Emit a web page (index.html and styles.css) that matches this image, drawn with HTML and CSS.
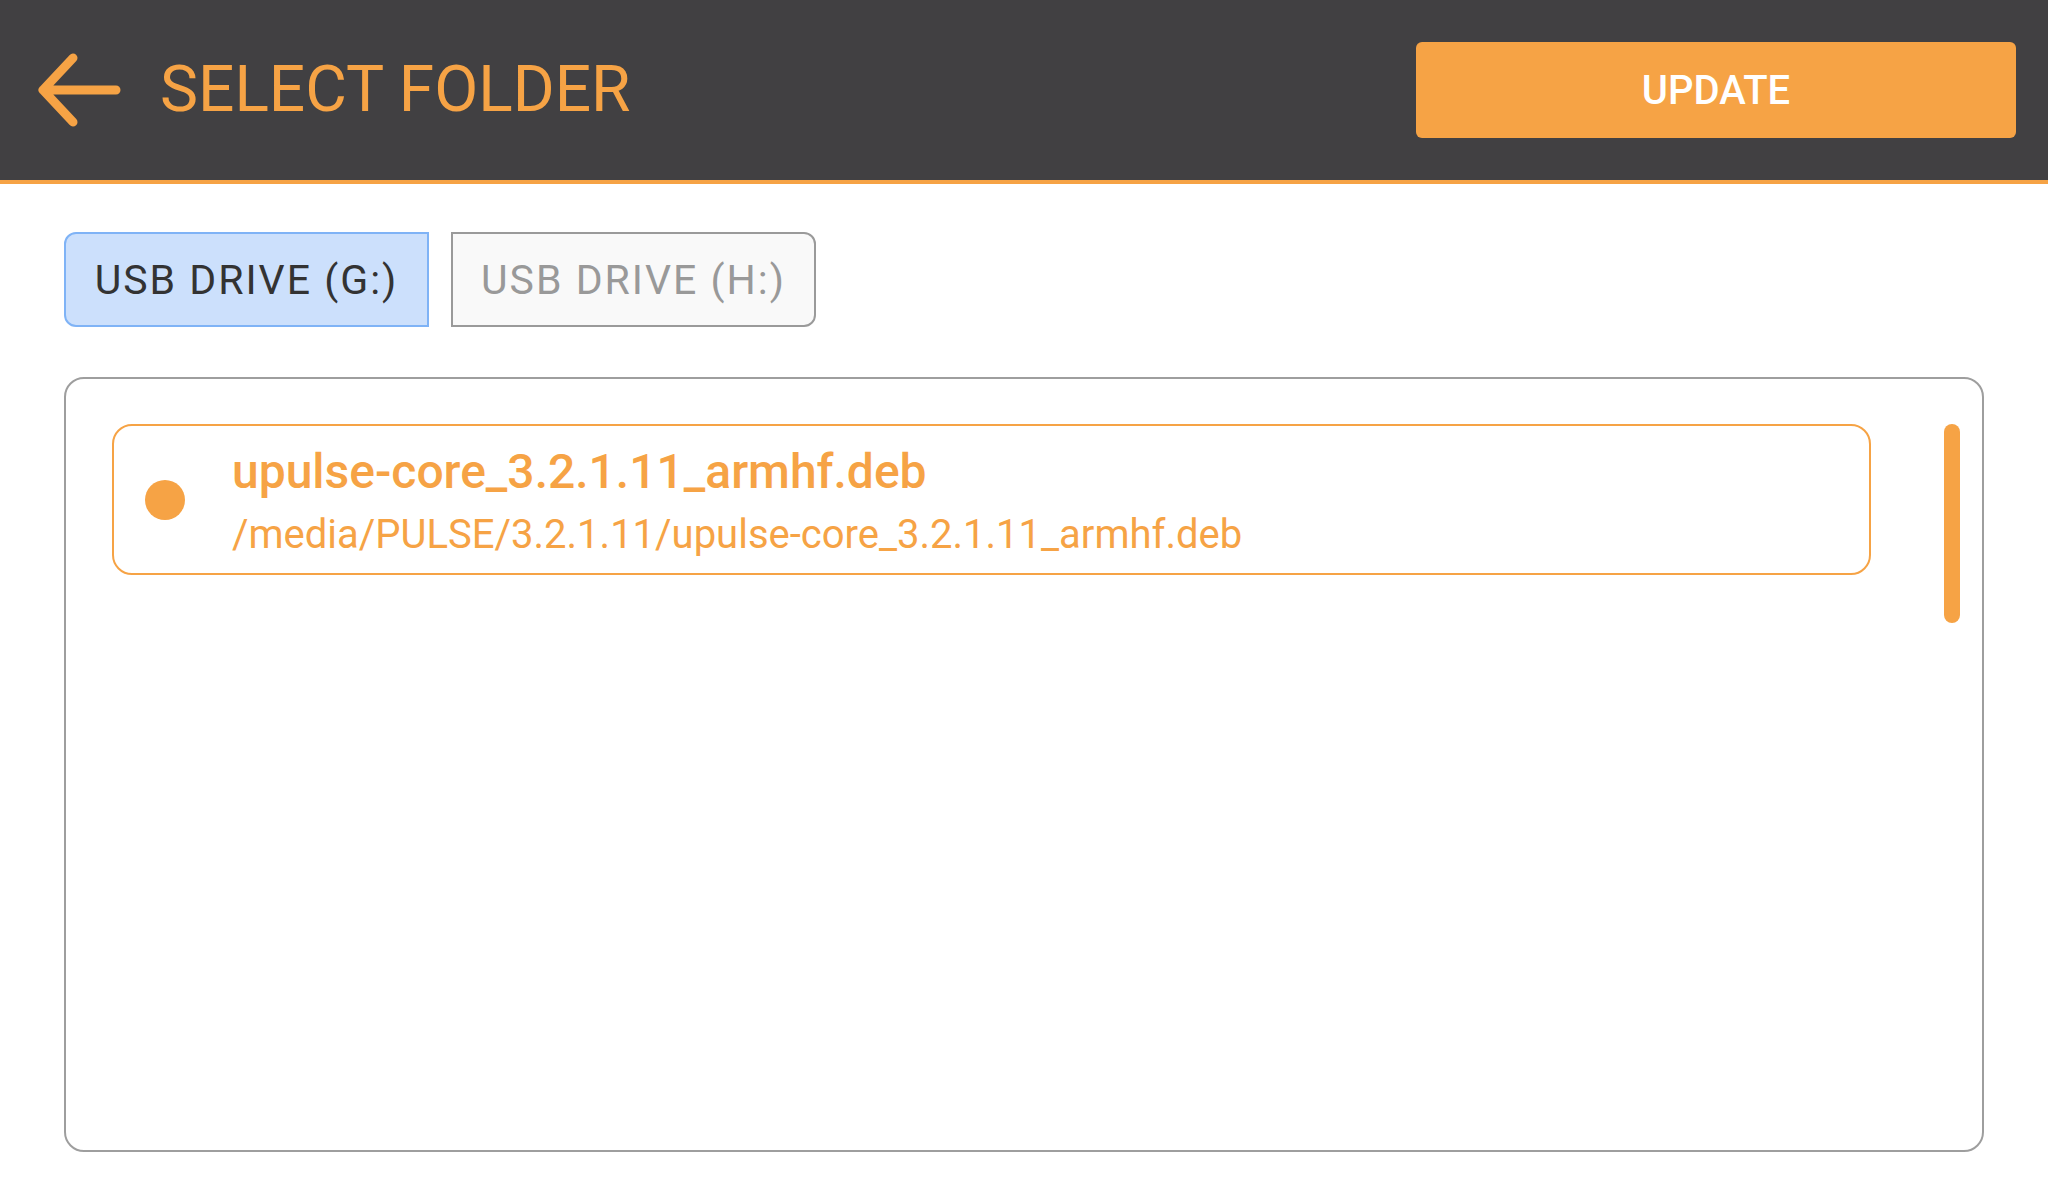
FILE: index.html
```html
<!DOCTYPE html>
<html>
<head>
<meta charset="utf-8">
<link rel="stylesheet" href="styles.css">
</head>
<body>
<header class="topbar">
  <svg class="back" width="90" height="80" viewBox="0 0 90 80">
    <path d="M82 40 H9 M39 8 L9 40 L39 72" fill="none" stroke="#F6A345" stroke-width="9" stroke-linecap="round" stroke-linejoin="round"/>
  </svg>
  <h1 class="title">SELECT FOLDER</h1>
  <button class="update">UPDATE</button>
</header>
<main class="content">
  <div class="tabs">
    <div class="tab tab-active">USB DRIVE (G:)</div>
    <div class="tab tab-idle">USB DRIVE (H:)</div>
  </div>
  <div class="listbox">
    <div class="list">
      <div class="item">
        <span class="dot"></span>
        <div class="texts">
          <div class="name">upulse-core_3.2.1.11_armhf.deb</div>
          <div class="path">/media/PULSE/3.2.1.11/upulse-core_3.2.1.11_armhf.deb</div>
        </div>
      </div>
    </div>
    <div class="scroll"><div class="thumb"></div></div>
  </div>
</main>
</body>
</html>
```
FILE: styles.css
```css
* { box-sizing: border-box; }
html, body { margin: 0; padding: 0; background: #ffffff; }
body { font-family: Roboto, "Noto Sans", sans-serif; width: 2048px; height: 1200px; overflow: hidden; }

.topbar {
  height: 184px;
  background: #414042;
  border-bottom: 4px solid #F6A345;
  display: flex;
  align-items: center;
  padding: 0 32px 0 34px;
}
.back { display: block; flex: none; }
.title {
  margin: 0 0 0 36px;
  font-size: 64px;
  font-weight: 400;
  color: #F6A345;
  line-height: 1;
}
.update {
  margin-left: auto;
  width: 600px;
  height: 96px;
  border: none;
  border-radius: 6px;
  background: #F6A345;
  color: #ffffff;
  font-family: Roboto, sans-serif;
  font-size: 40px;
  font-weight: 500;
}

.content { padding: 48px 64px 0 64px; }

.tabs { display: flex; gap: 22px; }
.tab {
  height: 95px;
  width: 365px;
  display: flex;
  align-items: center;
  justify-content: center;
  font-size: 41px;
  letter-spacing: 2px;
  border: 2px solid;
}
.tab-active {
  background: #CCE0FC;
  border-color: #7FB3F6;
  color: #333333;
  border-radius: 12px 0 0 12px;
}
.tab-idle {
  background: #F9F9F9;
  border-color: #9A9A9A;
  color: #999999;
  border-radius: 0 12px 12px 0;
}

.listbox {
  margin-top: 50px;
  height: 775px;
  border: 2px solid #9E9E9E;
  border-radius: 20px;
  display: flex;
  gap: 73px;
  padding: 45px 22px 0 46px;
}
.list { flex: 1; }
.item {
  height: 151px;
  border: 2px solid #F6A345;
  border-radius: 20px;
  display: flex;
  align-items: center;
  padding-left: 31px;
  color: #F6A345;
}
.dot {
  width: 40px;
  height: 40px;
  border-radius: 50%;
  background: #F6A345;
  flex: none;
}
.texts { margin-left: 47px; padding-top: 10px; }
.name { font-size: 48px; font-weight: 500; line-height: 60px; }
.path { font-size: 40px; font-weight: 400; line-height: 66px; }

.scroll { width: 16px; flex: none; }
.thumb { height: 199px; border-radius: 8px; background: #F6A345; }
```
